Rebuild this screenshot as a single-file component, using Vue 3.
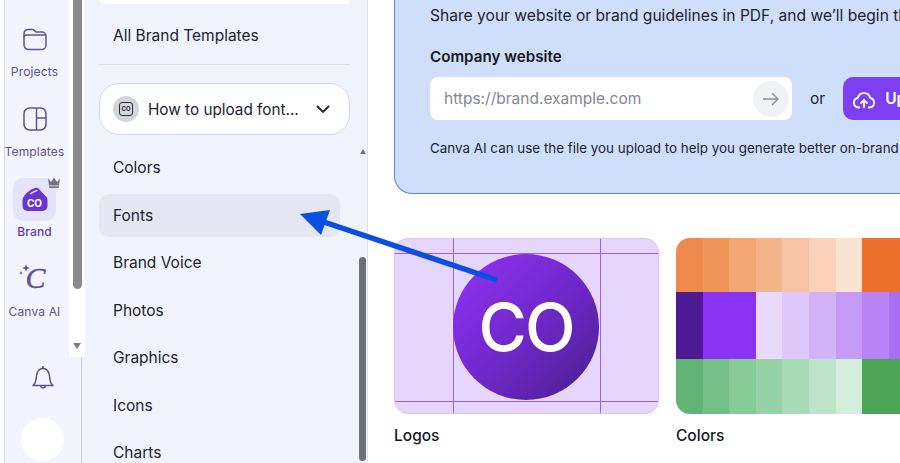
<template>
  <div class="app">
    <nav class="rail">
      <div v-for="item in railItems" :key="item.label" class="rail-item" :class="{ active: item.active }">
        <div class="rail-icon">
          <svg v-if="item.icon === 'folder'" width="26" height="26" viewBox="0 0 26 26" fill="none" stroke="#5f5290" stroke-width="1.5">
            <path d="M2 7.5a4 4 0 0 1 4-4h4.500c1.500 0 2 1.500 3.500 2.500h6a4 4 0 0 1 4 4v9a4.500 4.500 0 0 1-4.500 4.500h-13A4.500 4.500 0 0 1 2 19z" />
            <path d="M2 11.500c0-1.500 1-2.500 2.500-2.500h19" />
          </svg>
          <svg v-else-if="item.icon === 'templates'" width="26" height="26" viewBox="0 0 26 26" fill="none" stroke="#5f5290" stroke-width="1.5">
            <rect x="2" y="2" width="22" height="22" rx="5.500" />
            <path d="M14.500 2v22M14.500 12H24" />
          </svg>
          <div v-else-if="item.icon === 'brand'" class="brand-tile">
            <svg width="26" height="24" viewBox="0 0 26 24">
              <path d="M2 9C5 5 9 2.500 13 1c1.500-.5 3 0 4 1l6 6.500z" fill="#6a35cf" />
              <path d="M8 7c2.500-1.800 5-3 7.500-3.700" stroke="#e5e3f8" stroke-width="1.300" fill="none" />
              <rect x="0.500" y="8" width="25" height="16" rx="5" fill="#6a35cf" />
            </svg>
            <span class="brand-co">CO</span>
            <svg class="crown" width="14" height="12" viewBox="0 0 14 12" fill="#77747f">
              <path d="M1 1.500 4 5l3-4.500L10 5l3-3.500-1 7H2z" />
              <rect x="2" y="9.300" width="10" height="1.700" />
            </svg>
          </div>
          <div v-else-if="item.icon === 'ai'" class="ai-icon">
            <span class="ai-c">C</span>
            <svg class="sparkle" width="12" height="14" viewBox="0 0 12 14" fill="#5f5290">
              <path d="M7 0l1 3 3 1-3 1-1 3-1-3-3-1 3-1zM2 7l.6 1.400L4 9l-1.400.6L2 11l-.6-1.400L0 9l1.400-.6z" />
            </svg>
          </div>
        </div>
        <span class="rail-label">{{ item.label }}</span>
      </div>

      <div class="bell">
        <svg width="24" height="26" viewBox="0 0 24 26" fill="none" stroke="#5a4e90" stroke-width="1.500">
          <path d="M2 20.500c2.500-2 3-4 3.300-8C5.700 7 8 3.500 12 3.500s6.300 3.500 6.700 9c.3 4 .8 6 3.300 8z" stroke-linejoin="round" />
          <path d="M9.500 21a2.600 2.600 0 0 0 5 0M12 1v2.500" />
        </svg>
      </div>
      <div class="avatar"></div>

      <div class="rail-scroll">
        <div class="rail-thumb"></div>
        <div class="arrow-down"></div>
      </div>
    </nav>

    <aside class="panel">
      <div class="top-card"></div>
      <div class="panel-link">All Brand Templates</div>
      <div class="divider"></div>
      <div class="kit-select">
        <span class="kit-logo"><span class="kit-square">CO</span></span>
        <span class="kit-name">How to upload font...</span>
        <svg width="16" height="10" viewBox="0 0 16 10" fill="none" stroke="#1f2330" stroke-width="1.800">
          <path d="M2 2l6 6 6-6" />
        </svg>
      </div>
      <ul class="menu">
        <li v-for="m in menu" :key="m" :class="{ selected: m === 'Fonts' }">{{ m }}</li>
      </ul>
      <div class="arrow-up"></div>
      <div class="panel-thumb"></div>
    </aside>

    <main class="content">
      <section class="hero">
        <p class="hero-lead">Share your website or brand guidelines in PDF, and we’ll begin the process</p>
        <h3 class="hero-label">Company website</h3>
        <div class="hero-row">
          <div class="url-input">
            <span class="url-text">https://brand.example.com</span>
            <span class="url-go">
              <svg width="18" height="16" viewBox="0 0 18 16" fill="none" stroke="#8f9196" stroke-width="1.400">
                <path d="M1 8h15M10 2l6 6-6 6" />
              </svg>
            </span>
          </div>
          <span class="or">or</span>
          <button class="upload">
            <svg width="24" height="22" viewBox="0 0 24 22" fill="none" stroke="#fff" stroke-width="1.800">
              <path d="M8 19.500H6.500a4.800 4.800 0 0 1-.7-9.500 6.400 6.400 0 0 1 12.400 0 4.800 4.800 0 0 1-.7 9.500H16" stroke-linejoin="round" />
              <path d="M12 20v-7.500M8.500 15.500l3.500-3.500 3.500 3.500" />
            </svg>
            Upload file
          </button>
        </div>
        <p class="hero-note">Canva AI can use the file you upload to help you generate better on-brand content</p>
      </section>

      <section class="cards">
        <div class="card">
          <div class="logo-thumb">
            <i class="guide v" style="left: 58px"></i>
            <i class="guide v" style="left: 205px"></i>
            <i class="guide h" style="top: 14px"></i>
            <i class="guide h" style="top: 162px"></i>
            <div class="logo-circle">CO</div>
          </div>
          <div class="card-title">Logos</div>
        </div>
        <div class="card">
          <div class="colors-thumb">
            <div v-for="(row, i) in palette" :key="i" class="swatch-row">
              <span v-for="(c, j) in row" :key="j" :style="{ background: c }"></span>
            </div>
          </div>
          <div class="card-title">Colors</div>
        </div>
      </section>
    </main>

    <svg class="pointer" width="210" height="80" viewBox="0 0 210 80">
      <path d="M197 71 24 13" stroke="#0a50e0" stroke-width="5.500" fill="none" />
      <path d="M0 5 30 1 21 26z" fill="#0a50e0" />
    </svg>
  </div>
</template>

<script setup>
const railItems = [
  { label: 'Projects', icon: 'folder' },
  { label: 'Templates', icon: 'templates' },
  { label: 'Brand', icon: 'brand', active: true },
  { label: 'Canva AI', icon: 'ai' },
]

const menu = ['Colors', 'Fonts', 'Brand Voice', 'Photos', 'Graphics', 'Icons', 'Charts']

const palette = [
  ['#ef8a4c', '#f19659', '#f3a672', '#f4b48a', '#f6c3a4', '#f9d2b9', '#fbe3d1', '#ee6e2c', '#ee6e2c'],
  ['#4d1a94', '#8b32f5', '#8b32f5', '#e9d9fd', '#dfc6fb', '#d2b3f8', '#c69bf6', '#b983f5', '#a96ef2'],
  ['#63b377', '#74bf87', '#85ca97', '#96d1a7', '#a9dbb9', '#bde4c9', '#d3eedd', '#4ca455', '#4ca455'],
]
</script>

<style>
html, body { margin: 0; background: #fff; }
</style>

<style scoped>
.app {
  position: relative;
  display: flex;
  width: 900px;
  height: 463px;
  overflow: hidden;
  font-family: Inter, "Noto Sans", sans-serif;
  color: #1d2230;
}

/* left rail */
.rail {
  position: relative;
  width: 76px;
  margin-left: 4px;
  border-left: 1px solid #d8d8e2;
  background: #f4f4fe;
  flex-shrink: 0;
}
.rail-item {
  height: 80px;
  width: 59px;
  display: flex;
  flex-direction: column;
  align-items: center;
  color: #5f5290;
}
.rail-item:first-child { margin-top: 20px; }
.rail-icon {
  height: 44px;
  display: flex;
  align-items: center;
  justify-content: center;
  margin-top: -3px;
}
.rail-label {
  margin-top: 3px;
  font-size: 12px;
  line-height: 16px;
  letter-spacing: 0.15px;
  white-space: nowrap;
}
.rail-item.active { color: #5b3db5; }
.rail-item.active .rail-label { font-weight: 500; }
.brand-tile {
  position: relative;
  width: 43px;
  height: 43px;
  border-radius: 10px;
  background: #e5e3f8;
  display: flex;
  align-items: center;
  justify-content: center;
}
.brand-co {
  position: absolute;
  top: 19px;
  left: 0;
  right: 0;
  text-align: center;
  color: #fff;
  font-size: 10px;
  line-height: 12px;
  font-weight: 700;
}
.crown { position: absolute; top: -1px; right: -5px; }
.ai-icon { position: relative; width: 26px; height: 32px; }
.ai-c {
  position: absolute;
  left: 4px;
  top: -2px;
  font-family: "Liberation Serif", serif;
  font-style: italic;
  font-size: 30px;
  line-height: 34px;
  color: #5f5290;
  -webkit-text-stroke: 0.4px #5f5290;
}
.sparkle { position: absolute; left: -3px; top: 1px; }
.bell {
  margin: 25px 0 0 5px;
  width: 66px;
  display: flex;
  justify-content: center;
}
.avatar {
  width: 43px;
  height: 43px;
  border-radius: 50%;
  background: #fff;
  margin: 27px 0 0 16px;
}
.rail-scroll {
  position: absolute;
  left: 64px;
  top: 0;
  width: 16px;
  height: 357px;
  background: #fff;
  z-index: 2;
}
.rail-thumb {
  width: 9px;
  height: 289px;
  margin-left: 4px;
  background: #8a8a8a;
  border-radius: 0 0 5px 5px;
}
.arrow-down {
  margin: 54px 0 0 4px;
  width: 0;
  height: 0;
  border-left: 4.500px solid transparent;
  border-right: 4.500px solid transparent;
  border-top: 6px solid #7d7d7d;
}

/* brand panel */
.panel {
  position: relative;
  width: 287px;
  flex-shrink: 0;
  border-left: 1px solid #c9ccd8;
  border-right: 1px solid #dfe3ef;
  background: #f0f3fc;
  padding: 0 17px;
  box-sizing: border-box;
}
.top-card {
  width: 250px;
  height: 4px;
  margin-left: 1px;
  background: #fff;
  border-radius: 0 0 8px 8px;
}
.panel-link {
  padding-left: 14px;
  margin-top: 22px;
  font-size: 15.500px;
  line-height: 20px;
}
.divider {
  width: 251px;
  height: 1px;
  background: #dcdfea;
  margin-top: 18px;
}
.kit-select {
  display: flex;
  align-items: center;
  width: 251px;
  height: 52px;
  margin-top: 18px;
  box-sizing: border-box;
  border: 1px solid #d5d8e3;
  border-radius: 20px;
  background: #fff;
  padding: 0 18px 0 13px;
  font-size: 15.300px;
}
.kit-logo {
  width: 26px;
  height: 26px;
  border-radius: 50%;
  background: #d3d6d8;
  display: flex;
  align-items: center;
  justify-content: center;
  flex-shrink: 0;
}
.kit-square {
  width: 14px;
  height: 14px;
  border: 1px solid #2b2e36;
  border-radius: 3px;
  box-sizing: border-box;
  font-size: 6px;
  line-height: 11px;
  font-weight: 700;
  text-align: center;
}
.kit-name { flex: 1; margin-left: 9px; white-space: nowrap; }
.menu { list-style: none; margin: 9px 0 0; padding: 0; width: 241px; }
.menu li {
  height: 47.500px;
  line-height: 47.500px;
  padding-left: 14px;
  font-size: 15.500px;
  border-radius: 10px;
}
.menu li.selected {
  background: #e4e7f2;
  height: 43px;
  line-height: 43px;
  margin: 2px 0 2.500px;
}
.arrow-up {
  position: absolute;
  right: 1px;
  top: 149px;
  width: 0;
  height: 0;
  border-left: 3.500px solid transparent;
  border-right: 3.500px solid transparent;
  border-bottom: 5px solid #777;
}
.panel-thumb {
  position: absolute;
  right: 1px;
  top: 257px;
  width: 7px;
  height: 204px;
  border-radius: 4px;
  background: #6b7079;
}

/* main content */
.content {
  flex: 1;
  min-width: 0;
  padding-left: 26px;
}
.hero {
  width: 640px;
  height: 194px;
  box-sizing: border-box;
  background: #cfdffb;
  border: 1px solid #5b8ad8;
  border-top: none;
  border-right: none;
  border-bottom-left-radius: 18px;
  padding: 6px 0 0 35px;
  white-space: nowrap;
}
.hero-lead { margin: 0; font-size: 15.600px; line-height: 20px; }
.hero-label {
  margin: 21px 0 0;
  font-size: 15.200px;
  line-height: 20px;
  font-weight: 600;
  color: #14171f;
}
.hero-row {
  display: flex;
  align-items: center;
  margin-top: 10px;
}
.url-input {
  display: flex;
  align-items: center;
  justify-content: space-between;
  width: 362px;
  height: 43px;
  box-sizing: border-box;
  background: #fff;
  border-radius: 8px;
  padding: 0 3px 0 14px;
}
.url-text { color: #85888f; font-size: 15.500px; }
.url-go {
  width: 36px;
  height: 36px;
  border-radius: 50%;
  background: #f1f2f4;
  display: flex;
  align-items: center;
  justify-content: center;
}
.or { margin: 0 18px; font-size: 15.500px; }
.upload {
  display: flex;
  align-items: center;
  gap: 9px;
  height: 43px;
  padding: 0 14px 0 9px;
  border: none;
  border-radius: 10px;
  background: #7d3ff2;
  color: #fff;
  font-family: inherit;
  font-size: 15.500px;
  font-weight: 600;
}
.hero-note { margin: 18px 0 0; font-size: 13.400px; line-height: 20px; }

.cards {
  display: flex;
  gap: 17px;
  margin-top: 44px;
  width: 700px;
}
.card { flex-shrink: 0; }
.logo-thumb {
  position: relative;
  width: 265px;
  height: 176px;
  box-sizing: border-box;
  border: 1px solid #d6c6ec;
  border-radius: 14px;
  background: #e6d5fd;
  overflow: hidden;
}
.guide { position: absolute; background: #9a5fe6; }
.guide.v { top: 0; bottom: 0; width: 1px; }
.guide.h { left: 0; right: 0; height: 1px; }
.logo-circle {
  position: absolute;
  left: 58px;
  top: 15px;
  width: 146px;
  height: 146px;
  border-radius: 50%;
  background: linear-gradient(135deg, #8c30ee 10%, #6d27c6 55%, #4e1f94 95%);
  color: #fff;
  font-size: 66px;
  font-weight: 500;
  line-height: 146px;
  text-align: center;
  letter-spacing: -2px;
}
.colors-thumb {
  width: 240px;
  height: 176px;
  border-radius: 14px 0 0 14px;
  overflow: hidden;
  display: grid;
  grid-template-rows: 54px 67px 55px;
}
.swatch-row {
  display: grid;
  grid-template-columns: repeat(9, 26.600px);
}
.card-title {
  margin-top: 12px;
  font-size: 15.500px;
  line-height: 20px;
  font-weight: 500;
  color: #14171f;
}

/* annotation arrow */
.pointer {
  position: absolute;
  left: 300px;
  top: 209px;
}
</style>
